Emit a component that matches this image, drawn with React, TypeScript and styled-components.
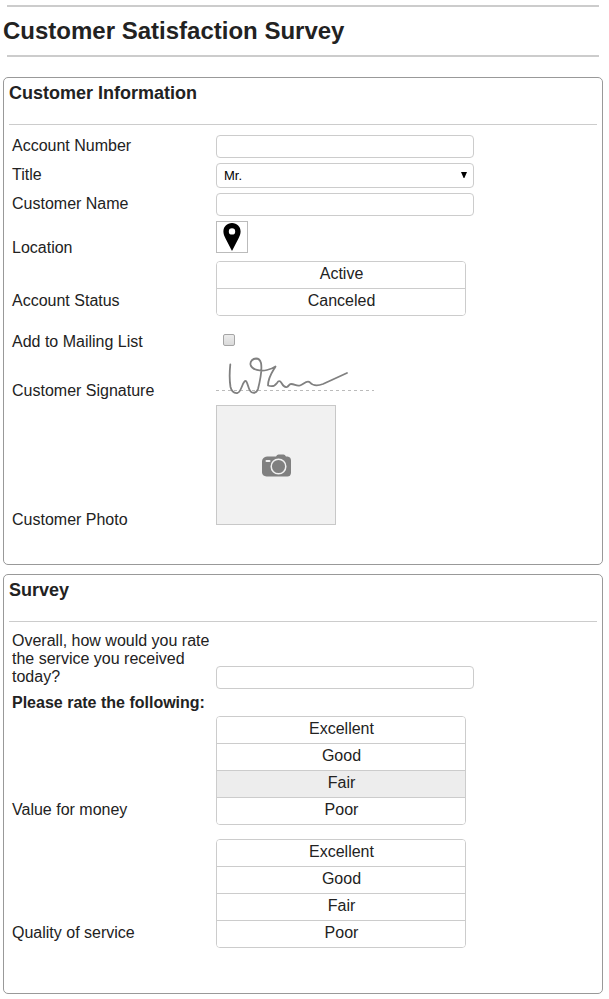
import React, { useState } from "react";
import styled, { createGlobalStyle } from "styled-components";

const GlobalStyle = createGlobalStyle`
  *, *::before, *::after { box-sizing: border-box; }
  body {
    margin: 0;
    background: #fff;
    color: #222;
    font-family: "Liberation Sans", Arial, Helvetica, sans-serif;
    font-size: 16px;
    line-height: 18px;
  }
`;

const Page = styled.main`
  display: flex;
  flex-direction: column;
  padding: 5px 6px 5px 3px;
`;

const Header = styled.header`
  margin-bottom: 20px;
`;

const Rule = styled.hr`
  height: 2px;
  margin: 0 4px;
  border: 0;
  background: #ccc;
`;

const PageTitle = styled.h1`
  margin: 0;
  padding: 10px 0;
  font-size: 24px;
  line-height: 28px;
  font-weight: bold;
`;

const Panel = styled.section`
  padding: 0 5px 35px;
  border: 1px solid #999;
  border-radius: 5px;

  & + & {
    margin-top: 9px;
  }
`;

const PanelTitle = styled.h2`
  margin: 0;
  padding: 5px 0 21px;
  border-bottom: 1px solid #ccc;
  font-size: 18px;
  line-height: 20px;
  font-weight: bold;
`;

const Fields = styled.div`
  display: flex;
  flex-direction: column;
  gap: 4px;
  padding: 10px 3px 0;
`;

const Row = styled.div`
  display: grid;
  grid-template-columns: 200px minmax(0, 1fr);
  column-gap: 4px;
  align-items: end;
`;

const Label = styled.label<{ $drop?: number }>`
  padding-bottom: ${(p) => p.$drop ?? 0}px;
`;

const GroupLabel = styled(Label).attrs({ as: "span" })``;

const SubHeading = styled.h3`
  margin: 0;
  font-size: 16px;
  line-height: 18px;
  font-weight: bold;
`;

const TextBox = styled.input`
  width: 100%;
  max-width: 258px;
  height: 23px;
  margin: 0 0 1px;
  padding: 0 7px;
  border: 1px solid #ccc;
  border-radius: 4px;
  background: #fff;
  color: #222;
  font: inherit;
`;

const SelectWrap = styled.div`
  position: relative;
  display: flex;
  width: 100%;
  max-width: 258px;
  margin-bottom: 1px;
`;

const Select = styled.select`
  appearance: none;
  width: 100%;
  height: 25px;
  padding: 0 20px 0 7px;
  border: 1px solid #ccc;
  border-radius: 4px;
  background: #fff;
  color: #000;
  font: 13px "Liberation Sans", Arial, sans-serif;
`;

const SelectArrow = styled.svg`
  position: absolute;
  top: 9px;
  right: 7px;
  pointer-events: none;
`;

const PinButton = styled.button`
  display: flex;
  align-items: center;
  justify-content: center;
  width: 32px;
  height: 32px;
  margin: 0 0 4px;
  padding: 0;
  border: 1px solid #bbb;
  background: #fff;
`;

const Options = styled.div`
  width: 100%;
  max-width: 250px;
  margin-bottom: 10px;
  overflow: hidden;
  border: 1px solid #ccc;
  border-radius: 4px;
`;

const Option = styled.label<{ $selected: boolean }>`
  display: block;
  padding: 3px 0 5px 1px;
  background: ${(p) => (p.$selected ? "#ededed" : "#fff")};
  text-align: center;
  cursor: pointer;

  & + & {
    border-top: 1px solid #ccc;
  }
`;

const HiddenRadio = styled.input`
  position: absolute;
  width: 1px;
  height: 1px;
  margin: 0;
  opacity: 0;
`;

const CheckBox = styled.input`
  appearance: none;
  display: block;
  width: 12px;
  height: 12px;
  margin: 4px 7px 7px;
  border: 1px solid #a5a5a5;
  border-radius: 2px;
  background: linear-gradient(#ececec, #dadada);

  &:checked {
    background: #777;
  }
`;

const Signature = styled.svg`
  display: block;
  margin-bottom: 1px;
`;

const PhotoButton = styled.button`
  display: flex;
  align-items: center;
  justify-content: center;
  width: 120px;
  height: 120px;
  margin: 0 0 4px;
  padding: 0;
  border: 1px solid #c8c8c8;
  background: #f1f1f1;
`;

type ChoiceProps = {
  name: string;
  label: string;
  options: string[];
  initial?: string;
};

function Choice({ name, label, options, initial }: ChoiceProps) {
  const [value, setValue] = useState(initial ?? "");
  return (
    <Row>
      <GroupLabel id={`${name}-label`} $drop={16}>
        {label}
      </GroupLabel>
      <Options role="radiogroup" aria-labelledby={`${name}-label`}>
        {options.map((option) => (
          <Option key={option} $selected={option === value}>
            <HiddenRadio
              type="radio"
              name={name}
              value={option}
              checked={option === value}
              onChange={() => setValue(option)}
            />
            {option}
          </Option>
        ))}
      </Options>
    </Row>
  );
}

const ratings = ["Excellent", "Good", "Fair", "Poor"];

export default function App() {
  return (
    <>
      <GlobalStyle />
      <Page>
        <Header>
          <Rule />
          <PageTitle>Customer Satisfaction Survey</PageTitle>
          <Rule />
        </Header>

        <Panel>
          <PanelTitle>Customer Information</PanelTitle>
          <Fields>
            <Row>
              <Label htmlFor="account" $drop={4}>Account Number</Label>
              <TextBox id="account" type="text" />
            </Row>
            <Row>
              <Label htmlFor="title" $drop={5}>Title</Label>
              <SelectWrap>
                <Select id="title" defaultValue="Mr.">
                  <option>Mr.</option>
                  <option>Mrs.</option>
                  <option>Ms.</option>
                </Select>
                <SelectArrow width="6" height="6" viewBox="0 0 6 6" aria-hidden="true">
                  <path d="M0 0h6L3.400 6H2.600z" fill="#000" />
                </SelectArrow>
              </SelectWrap>
            </Row>
            <Row>
              <Label htmlFor="name" $drop={4}>Customer Name</Label>
              <TextBox id="name" type="text" />
            </Row>
            <Row>
              <Label htmlFor="location">Location</Label>
              <PinButton id="location" type="button">
                <svg width="18" height="28" viewBox="0 0 18 28" aria-hidden="true">
                  <path
                    fill="#000"
                    fillRule="evenodd"
                    d="M9 0C4 0 .4 3.6.4 8.4c0 2.400.9 4.500 2 6.800L9 28l6.600-12.800c1.100-2.300 2-4.400 2-6.800C17.600 3.600 14 0 9 0zM9 5.200a3.200 3.200 0 1 1 0 6.400 3.200 3.200 0 0 1 0-6.400z"
                  />
                </svg>
              </PinButton>
            </Row>
            <Choice name="status" label="Account Status" options={["Active", "Canceled"]} />
            <Row>
              <Label htmlFor="mailing" $drop={2}>Add to Mailing List</Label>
              <CheckBox id="mailing" type="checkbox" />
            </Row>
            <Row>
              <GroupLabel $drop={1}>Customer Signature</GroupLabel>
              <Signature width="158" height="43" viewBox="0 0 158 43" role="img" aria-label="Signature">
                <path d="M0 33.500H158" stroke="#bbb" strokeDasharray="3 3" />
                <path
                  d="M14.300 7.500C13.500 15 13.500 24 14.500 30C15.500 34 18 36.500 21.500 36C25.500 35 26.500 24 29.500 24C32 24 32 34.500 36 35.500C39 36.300 41 35 42 32C44 24 46 11 45 6C44 2 42 1.500 40 1.500C37 1.700 34 4 34.500 7.500C35.500 13 45 14.500 51 13C55 12 58 10.500 59.500 9.500C57 14 52 20 52 28.500C56 30 59 29 61 26C62.500 23.500 64 23.500 65.500 26C67 28.500 68 31 71 30C73 29 73 27 75 27C79 27 80 29.500 84 28.500C88 27 91 22.500 94 25.500C98 30 103 28.500 107 27L131 16"
                  fill="none"
                  stroke="#808080"
                  strokeWidth="1.800"
                  strokeLinecap="round"
                  strokeLinejoin="round"
                />
              </Signature>
            </Row>
            <Row>
              <Label htmlFor="photo">Customer Photo</Label>
              <PhotoButton id="photo" type="button">
                <svg width="32" height="24" viewBox="-1.5 -1 32 24" aria-hidden="true">
                  <path
                    fill="#808080"
                    d="M5.500 2.500H14.500Q15.500 .5 17 .5H22Q23.500 .5 24.500 2.500H26Q29.500 3 29.500 6.500V19Q29 22.500 26 22.500H5Q.7 22 .5 18.500V7Q1 3 5.500 2.500z"
                  />
                  <rect x="4" y="6" width="5" height="2" rx="1" fill="#f1f1f1" />
                  <circle cx="17" cy="12.500" r="7.300" fill="none" stroke="#f1f1f1" strokeWidth="1.500" />
                </svg>
              </PhotoButton>
            </Row>
          </Fields>
        </Panel>

        <Panel>
          <PanelTitle>Survey</PanelTitle>
          <Fields>
            <Row>
              <Label htmlFor="overall" $drop={4}>
                Overall, how would you rate the service you received today?
              </Label>
              <TextBox id="overall" type="text" />
            </Row>
            <SubHeading>Please rate the following:</SubHeading>
            <Choice name="value" label="Value for money" options={ratings} initial="Fair" />
            <Choice name="quality" label="Quality of service" options={ratings} />
          </Fields>
        </Panel>
      </Page>
    </>
  );
}
